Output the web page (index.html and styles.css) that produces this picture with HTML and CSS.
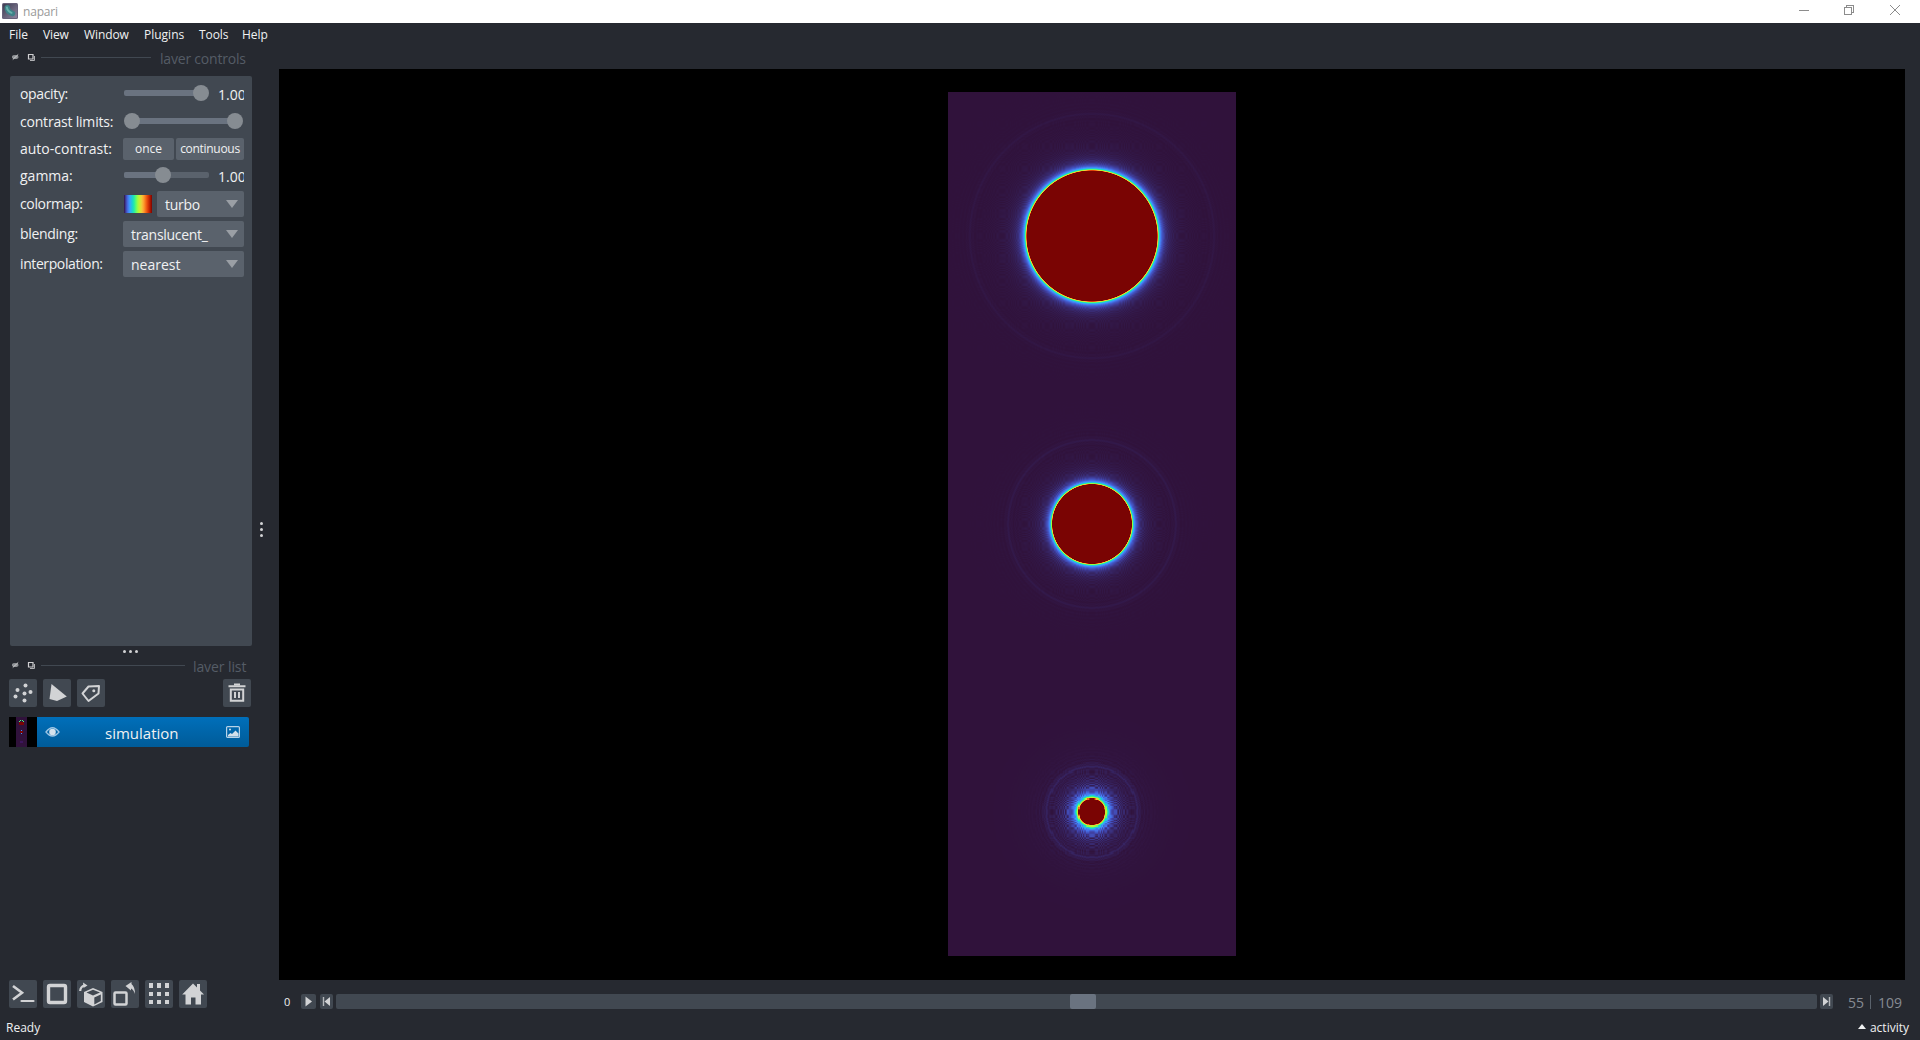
FILE: index.html
```html
<!DOCTYPE html>
<html lang="en">
<head>
<meta charset="utf-8">
<title>napari</title>
<link rel="stylesheet" href="styles.css">
</head>
<body>
<header class="titlebar">
  <svg class="logo" width="16" height="16" viewBox="0 0 16 16"><defs><linearGradient id="lg" x1="0" y1="0" x2="1" y2="1"><stop offset="0" stop-color="#3c3c50"/><stop offset="1" stop-color="#8e86a0"/></linearGradient></defs><rect width="16" height="16" rx="1.5" fill="#68627a"/><rect x="1" y="1" width="14" height="14" rx="1" fill="url(#lg)"/><path d="M5.3 4.8Q5.200 8.500 10.500 10.500" fill="none" stroke="#3f8288" stroke-width="5.400" stroke-linecap="round"/><path d="M5 4.500Q5.200 8 9.500 9.800" fill="none" stroke="#67b2ac" stroke-width="2" stroke-linecap="round"/></svg>
  <span class="title">napari</span>
  <svg class="winctl" width="102" height="12" viewBox="0 0 102 12" fill="none" stroke="#8c8c8c" shape-rendering="crispEdges"><path d="M0 6.500H10"/><path d="M45.500 3.500H52.500V10.500H45.500ZM47.500 3.500V1.500H54.500V8.500H52.500"/><path d="M91 1L101 11M101 1L91 11" shape-rendering="auto"/></svg>
</header>
<nav class="menubar"><span class="m-file">File</span><span class="m-view">View</span><span class="m-window">Window</span><span class="m-plugins">Plugins</span><span class="m-tools">Tools</span><span class="m-help">Help</span></nav>
<svg width="0" height="0" class="defs"><defs>
  <g id="dock"><ellipse cx="3.200" cy="5" rx="3.300" ry="2" fill="#8f9296"/><path d="M.8 7.500L6.200 2.500" stroke="#d0d0d2" stroke-width="1"/><path d="M16.500 2.500H21V7H16.500Z" fill="none" stroke="#d0d0d2" stroke-width="1.200"/><path d="M18 8.500H22.500V4" fill="none" stroke="#b0b1b4" stroke-width="1"/></g>
</defs></svg>
<main class="workspace">
  <aside class="docks">
    <div class="dockhead head-controls"><svg width="24" height="11"><use href="#dock"/></svg><i></i><span>layer controls</span></div>
    <section class="controls">
      <div class="row first"><label class="l-opacity">opacity:</label><svg class="field" width="86" height="16"><rect x="1" y="5" width="84" height="6" rx="2" fill="#6a7380"/><circle cx="78" cy="8" r="8" fill="#868c92"/></svg><span class="num">1.00</span></div>
      <div class="row"><label class="l-contrast">contrast limits:</label><svg class="field" width="121" height="16"><rect x="8" y="5" width="105" height="6" fill="#6a7380"/><circle cx="9" cy="8" r="8" fill="#868c92"/><circle cx="112" cy="8" r="8" fill="#868c92"/></svg></div>
      <div class="row"><label class="l-auto">auto-contrast:</label><button class="once">once</button><button class="cont">continuous</button></div>
      <div class="row"><label class="l-gamma">gamma:</label><svg class="field" width="86" height="16"><rect x="1" y="5" width="85" height="6" rx="2" fill="#5a626c"/><rect x="1" y="5" width="40" height="6" rx="2" fill="#6a7380"/><circle cx="40" cy="8" r="8" fill="#868c92"/></svg><span class="num">1.00</span></div>
      <div class="row tall"><label class="l-colormap">colormap:</label><span class="ramp"></span><div class="combo short"><span class="c-turbo">turbo</span><b></b></div></div>
      <div class="row tall"><label class="l-blending">blending:</label><div class="combo"><span class="c-trans">translucent_</span><b></b></div></div>
      <div class="row tall"><label class="l-interp">interpolation:</label><div class="combo"><span class="c-near">nearest</span><b></b></div></div>
    </section>
    <div class="grip"><i></i><i></i><i></i></div>
    <div class="dockhead head-list"><svg width="24" height="11"><use href="#dock"/></svg><i></i><span>layer list</span></div>
    <div class="tools">
      <svg class="btn" viewBox="0 0 28 28"><g fill="#d2d3d5"><circle cx="16.500" cy="6.500" r="2"/><circle cx="8.500" cy="11" r="2"/><circle cx="15.500" cy="14.500" r="2"/><circle cx="21.500" cy="13" r="2"/><circle cx="6.500" cy="17.500" r="2"/><circle cx="15.500" cy="21.500" r="2"/></g></svg>
      <svg class="btn" viewBox="0 0 28 28"><path d="M8.500 5L23.800 17.600L14 22L6.500 20Z" fill="#d2d3d5"/></svg>
      <svg class="btn" viewBox="0 0 28 28"><path d="M5.500 14.500L11.500 7.500L22 7L21.500 14.500L11.500 22Z" fill="none" stroke="#d2d3d5" stroke-width="2" stroke-linejoin="round"/><circle cx="16.800" cy="11.800" r="1.500" fill="#d2d3d5"/></svg>
      <svg class="btn trash" viewBox="0 0 28 28"><g fill="none" stroke="#d2d3d5"><path d="M5.500 7.200H22.500" stroke-width="2"/><path d="M11 5.500H17" stroke-width="2"/><path d="M7.800 10.500H20.200V21.800H7.800Z" stroke-width="2"/><path d="M12 13V19M16 13V19" stroke-width="2"/></g></svg>
    </div>
    <div class="layer">
      <svg width="28" height="30" shape-rendering="crispEdges"><rect width="28" height="30" fill="#000"/><rect x="7" width="11" height="30" fill="#30123b"/><path d="M10 5H15V8H10Z" fill="#7a0403"/><path d="M10 4h1v1h-1zM11 3h1v1h-1zM13 3h1v1h-1zM14 4h1v1h-1z" fill="#48f882"/><path d="M11 14H14V16H11Z" fill="#7a0403"/><path d="M12 13h1v1h-1zM12 16h1v1h-1z" fill="#4390fe"/><path d="M11 24h3v2h-3z" fill="#3c155c"/></svg>
      <div class="layerbody">
        <svg width="16" height="12" viewBox="0 0 16 12"><path d="M1 6Q7.500-2.500 14 6Q7.500 14 1 6Z" fill="none" stroke="#9fc6e4" stroke-width="1.300"/><circle cx="7.500" cy="6" r="3.300" fill="#d5e2ec"/></svg>
        <span>simulation</span>
        <svg width="14" height="12" viewBox="0 0 14 12"><rect x=".6" y=".6" width="12.800" height="10.800" rx="1" fill="none" stroke="#b7d3e8" stroke-width="1.200"/><path d="M2 10.500V9L4.500 7L6 8L9.500 4.500L12.500 7.500V10.500Z" fill="#d2e0eb"/><circle cx="4" cy="3.600" r="1" fill="#d2e0eb"/></svg>
      </div>
    </div>
    <div class="viewer">
      <svg class="btn" viewBox="0 0 28 28"><path d="M4 6L13 12.800L4 19.500" fill="none" stroke="#d2d3d5" stroke-width="2.600"/><path d="M12.500 21H24.500" stroke="#d2d3d5" stroke-width="2.200" stroke-linecap="round"/></svg>
      <svg class="btn" viewBox="0 0 28 28"><rect x="5.500" y="5.500" width="17" height="17" rx="1.500" fill="none" stroke="#d2d3d5" stroke-width="3.400"/></svg>
      <svg class="btn" viewBox="0 0 28 28"><path d="M7 12L16 8L25.500 12V22L16 26.500L7 22Z" fill="#d2d3d5"/><path d="M9.500 12.500L16 9.700L23 12.500L16 15.500Z" fill="#414851"/><path d="M17.300 17.500L23.800 14.500V21L17.300 24.500Z" fill="#414851"/><path d="M3.200 11Q3.500 6.500 7.500 5.500" fill="none" stroke="#d2d3d5" stroke-width="2.200"/><path d="M6 2.500L10.500 5.500L6.500 8Z" fill="#d2d3d5"/></svg>
      <svg class="btn" viewBox="0 0 28 28"><rect x="3.500" y="12.500" width="12" height="12" rx="1" fill="none" stroke="#d2d3d5" stroke-width="2.500"/><path d="M14.500 6L20.500 2V4Q24 7 24 14Q22.500 9.500 20 8.500V10.500Z" fill="#d2d3d5"/></svg>
      <svg class="btn" viewBox="0 0 28 28" fill="#d2d3d5"><path d="M4 3h4v5H4zM12 3h4v5h-4zM20 3h4v5h-4zM4 12h4v4H4zM12 12h4v4h-4zM20 12h4v4h-4zM4 20h4v4H4zM12 20h4v4h-4zM20 20h4v4h-4z"/></svg>
      <svg class="btn" viewBox="0 0 28 28"><path d="M14 3.500L18 7.500V4H21V10.500L25 14.500H22V24.500H16.500V17.500H12V24.500H6.500V14.500H3.200Z" fill="#d2d3d5"/></svg>
    </div>
  </aside>
  <div class="splitter"><i></i><i></i><i></i></div>
  <section class="view">
    <div class="stage"><canvas id="simulation" width="288" height="864"></canvas></div>
    <div class="dims">
      <span class="axis">0</span>
      <svg class="play" width="15" height="15"><path d="M4.500 2.500L11 7.500L4.500 12.500Z" fill="#d2d3d5"/></svg>
      <svg class="step" width="13" height="15"><path d="M3.500 3V12" stroke="#b5b8bc" stroke-width="1.400"/><path d="M10 3V12L4.500 7.500Z" fill="#d2d3d5"/></svg>
      <div class="track"><i></i></div>
      <svg class="step" width="13" height="15"><path d="M9.500 3V12" stroke="#b5b8bc" stroke-width="1.400"/><path d="M3 3V12L8.500 7.500Z" fill="#d2d3d5"/></svg>
      <span class="cur">55</span><i class="sep"></i><span class="max">109</span>
    </div>
  </section>
</main>
<footer class="status"><span class="ready">Ready</span><span class="activity"><b></b><span>activity</span></span></footer>
<script src="simulation.js"></script>
</body>
</html>
```
FILE: styles.css
```css
* { box-sizing: border-box; }
html { height: 1040px; overflow: hidden; }
body { margin: 0; width: 1920px; height: 1040px; overflow: hidden; display: flex; flex-direction: column; background: #262930; color: #f0f1f2; font: 14px/18px "Open Sans", "Noto Sans", sans-serif; }
svg { display: block; flex: none; }
.defs { display: none; }
.titlebar { height: 23px; flex: none; background: #fff; display: flex; align-items: flex-start; padding: 3px 19px 0 2px; }
.title { font-size: 12px; color: #999; margin: 0 auto 0 5px; letter-spacing: -.2px; }
.winctl { margin-top: 1px; }
.menubar { height: 23px; flex: none; display: flex; padding: 3px 0 0 9px; font-size: 12px; }
.menubar span { flex: none; white-space: nowrap; }
.m-file { width: 34px; } .m-view { width: 41px; } .m-window { width: 60px; } .m-plugins { width: 55px; } .m-tools { width: 43px; }
.m-view, .m-window, .m-tools { letter-spacing: -.1px; }
.workspace { height: 966px; flex: none; display: flex; }
.docks { width: 252px; flex: none; display: flex; flex-direction: column; }
.dockhead { display: flex; align-items: center; padding-left: 12px; flex: none; color: #555c66; }
.dockhead i { height: 1px; background: #414851; margin-left: 5px; }
.dockhead span { margin: -1px 0 0 auto; height: 14px; line-height: 18px; overflow: hidden; white-space: nowrap; }
.head-controls { height: 23px; margin-bottom: 7px; }
.head-controls i { width: 110px; }
.head-controls span { width: 92px; letter-spacing: -.2px; }
.head-list { height: 23px; }
.head-list i { width: 144px; }
.head-list span { width: 59px; letter-spacing: -.1px; }
.controls { margin-left: 10px; height: 570px; flex: none; background: #414851; border-radius: 2px; padding: 4px 8px 0 10px; }
.row { height: 27px; display: flex; align-items: center; }
.row.first { height: 28px; }
.row.tall { height: 30px; }
.row label { width: 103px; flex: none; white-space: nowrap; }
.row .l-opacity, .row .l-colormap { letter-spacing: -.35px; }
.row .l-contrast { letter-spacing: -.2px; }
.row .l-blending, .c-turbo, .c-trans { letter-spacing: -.3px; }
.row .l-interp { letter-spacing: -.4px; }
.row .field { margin-top: -2px; }
.num { width: 26px; margin: 2px 0 0 9px; overflow: hidden; white-space: nowrap; }
.row button { border: 0; padding: 0; height: 22px; background: #5a626c; border-radius: 2px; color: #f0f1f2; font: 12px/20px "Open Sans", sans-serif; }
.once { width: 51px; margin-right: 2px; }
.row .cont { width: 68px; letter-spacing: -.3px; }
.ramp { width: 28px; height: 18px; margin: 0 5px 0 1px; background: linear-gradient(90deg,#30123b,#4145ab 7%,#4675ed 14%,#39a2fc 21%,#1bcfd4 29%,#24eca6 36%,#61fc6c 43%,#a4fc3b 50%,#d1e834 57%,#f3c63a 64%,#fe9b2d 71%,#f36315 79%,#d93806 86%,#b11901 93%,#7a0402); }
.combo { width: 121px; height: 26px; background: #5a626c; border-radius: 2px; display: flex; align-items: center; padding: 0 6px 0 8px; white-space: nowrap; }
.combo.short { width: 87px; }
.combo span { margin-top: 1px; }
.combo b { margin: -1px 0 0 auto; border: 6.5px solid transparent; border-top: 8px solid #9a9fa5; border-bottom: 0; }
.grip { display: flex; gap: 3px; margin: 4px 0 1px 123px; height: 3px; }
.grip i, .splitter i { width: 3px; height: 3px; border-radius: 50%; background: #d2d3d5; }
.tools { display: flex; gap: 6px; padding: 0 1px 0 9px; margin-top: 2px; height: 28px; }
.btn { width: 28px; height: 28px; background: #414851; border-radius: 2px; }
.trash { margin-left: auto; }
.layer { display: flex; margin: 10px 3px 0 9px; height: 30px; flex: none; }
.layerbody { flex: 1; display: flex; align-items: center; padding: 0 9px 0 8px; background: linear-gradient(#006fba,#005b98); border-radius: 0 2px 2px 0; }
.layerbody span { font-size: 15px; margin: 2px auto 0 44px; }
.viewer { display: flex; gap: 6px; margin: auto 0 4px 9px; }
.splitter { width: 27px; flex: none; display: flex; flex-direction: column; gap: 3px; padding: 476px 0 0 8px; }
.view { flex: 1; min-width: 0; padding: 23px 15px 0 0; }
.stage { height: 911px; background: #000; padding: 23px 0 0 669px; }
.stage canvas { display: block; width: 288px; height: 864px; image-rendering: pixelated; background: #30123b; }
.dims { display: flex; align-items: center; height: 15px; margin-top: 14px; padding-left: 5px; }
.axis { font-size: 11px; width: 17px; }
.play, .step { background: #414851; border-radius: 2px; }
.play { margin-right: 4px; }
.step { margin-right: 3px; }
.track { width: 1481px; height: 15px; margin-right: 3px; background: #414851; border-radius: 2px; padding-left: 734px; }
.track i { display: block; width: 26px; height: 15px; background: #6a7380; border-radius: 2px; }
.cur, .max { color: #868b93; line-height: 15px; margin-top: 1px; }
.cur { margin-left: 12px; width: 22px; }
.sep { width: 1px; height: 14px; background: #5a626c; margin-right: 7px; }
.status { height: 28px; display: flex; justify-content: space-between; padding: 7px 11px 0 6px; font-size: 12px; }
.activity { display: flex; gap: 4px; }
.activity b { height: 0; margin-top: 5px; border: 4.500px solid transparent; border-bottom: 5px solid #f0f1f2; border-top: 0; }
```
FILE: simulation.js
```js
const canvas = document.getElementById('simulation');
const ctx = canvas.getContext('2d');
const size = 288;
const image = ctx.createImageData(size, size * 3);

// Colour stops of the turbo colormap, evenly spaced from 0 to 1.
const stops = [
  [48, 18, 59], [65, 69, 171], [70, 117, 237], [57, 162, 252], [27, 207, 212],
  [36, 236, 166], [97, 252, 108], [164, 252, 59], [209, 232, 52], [243, 198, 58],
  [254, 155, 45], [243, 99, 21], [217, 56, 6], [177, 25, 1], [122, 4, 3]
];

function turbo(t) {
  const s = Math.max(0, Math.min(1, t)) * (stops.length - 1);
  const i = Math.min(stops.length - 2, Math.floor(s));
  return stops[i].map((c, n) => c + (stops[i + 1][n] - c) * (s - i));
}

// r: radius, ring: outer ripple radius, k and p: falloff, cell: sampling step.
const bodies = [
  { r: 65.3, ring: 122, k: 0.42, p: 2, wave: 0.008, echo: 0.004, cell: 1 },
  { r: 39.6, ring: 84, k: 0.5, p: 1.85, wave: 0.014, echo: 0.006, cell: 1 },
  { r: 13.1, ring: 46, k: 0.42, p: 1.5, wave: 0.1, echo: 0.012, cell: 1.125 }
];

function field(body, x, y) {
  const r = Math.hypot(x, y);
  const d = r - body.r;
  if (d <= 0) return 1;
  const near = 1 - Math.exp(-d / 3);
  const fade = near * Math.exp(-d / (body.ring * 0.22));
  let v = Math.pow(1 + body.k * d, -body.p) * Math.exp(-d / (body.ring * 0.7));
  v += body.wave * fade * Math.cos(x * x * 0.14) * Math.cos(y * y * 0.14);
  v += body.echo * 0.4 * Math.cos(r * 1.8) * Math.exp(-Math.abs(r - body.ring) / 9);
  v += body.echo * Math.exp(-Math.pow((r - body.ring) / 2.4, 2));
  return Math.max(0, v);
}

for (let j = 0; j < size * 3; j++) {
  const body = bodies[Math.floor(j / size)];
  for (let i = 0; i < size; i++) {
    const snap = n => (Math.floor(n / body.cell) + 0.5) * body.cell;
    const x = snap(i - size / 2 + 0.5);
    const y = snap(j % size - size / 2 + 0.5);
    image.data.set([...turbo(field(body, x, y)), 255], (j * size + i) * 4);
  }
}
ctx.putImageData(image, 0, 0);
```
